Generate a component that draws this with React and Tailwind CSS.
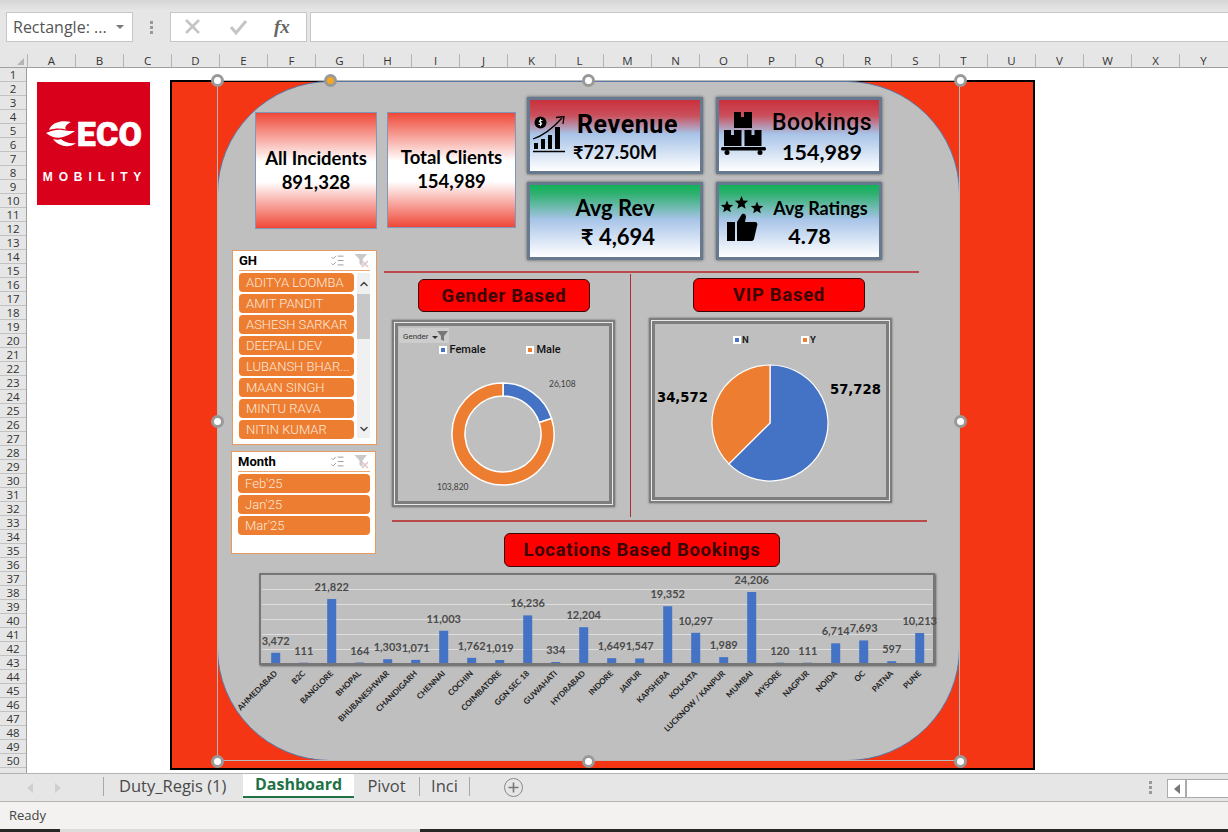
import React from "react";
import { ListChecks, ChevronUp, ChevronDown } from "lucide-react";

const cols = "ABCDEFGHIJKLMNOPQRSTUVWXY".split("");
const rows = Array.from({ length: 50 }, (_, i) => i + 1);
const gh = ["ADITYA LOOMBA", "AMIT PANDIT", "ASHESH SARKAR", "DEEPALI DEV", "LUBANSH BHAR...", "MAAN SINGH", "MINTU RAVA", "NITIN KUMAR"];
const months = ["Feb'25", "Jan'25", "Mar'25"];
const bars = [
  ["AHMEDABAD", 3472], ["B2C", 111], ["BANGLORE", 21822], ["BHOPAL", 164], ["BHUBANESHWAR", 1303], ["CHANDIGARH", 1071],
  ["CHENNAI", 11003], ["COCHIN", 1762], ["COIMBATORE", 1019], ["GGN SEC 18", 16236], ["GUWAHATI", 334], ["HYDRABAD", 12204],
  ["INDORE", 1649], ["JAIPUR", 1547], ["KAPSHERA", 19352], ["KOLKATA", 10297], ["LUCKNOW / KANPUR", 1989], ["MUMBAI", 24206],
  ["MYSORE", 120], ["NAGPUR", 111], ["NOIDA", 6714], ["OC", 7693], ["PATNA", 597], ["PUNE", 10213],
];

const pt = (cx, cy, r, f) => {
  const a = f * 2 * Math.PI;
  return [cx + r * Math.sin(a), cy - r * Math.cos(a)];
};
const pieSlice = (cx, cy, r, a, b) => {
  const [x1, y1] = pt(cx, cy, r, a);
  const [x2, y2] = pt(cx, cy, r, b);
  return `M${cx} ${cy}L${x1} ${y1}A${r} ${r} 0 ${b - a > 0.5 ? 1 : 0} 1 ${x2} ${y2}Z`;
};
const ringSlice = (cx, cy, R, r, a, b) => {
  const [x1, y1] = pt(cx, cy, R, a);
  const [x2, y2] = pt(cx, cy, R, b);
  const [x3, y3] = pt(cx, cy, r, b);
  const [x4, y4] = pt(cx, cy, r, a);
  const l = b - a > 0.5 ? 1 : 0;
  return `M${x1} ${y1}A${R} ${R} 0 ${l} 1 ${x2} ${y2}L${x3} ${y3}A${r} ${r} 0 ${l} 0 ${x4} ${y4}Z`;
};
const star = (cx, cy, R) => {
  let d = "";
  for (let i = 0; i < 10; i++) {
    const [x, y] = pt(cx, cy, i % 2 ? R * 0.45 : R, i / 10);
    d += `${i ? "L" : "M"}${x} ${y}`;
  }
  return d + "Z";
};

const FilterClear = () => (
  <svg width="15" height="15" viewBox="0 0 15 15">
    <path d="M0.5 1H13L8.5 6.5V13L5.500 11V6.500Z" fill="#c9c9c9" />
    <path d="M8 8L14 14M14 8L8 14" stroke="#e2c4c4" strokeWidth="1.500" />
  </svg>
);

const SlicerHead = ({ title }) => (
  <div className="flex h-[20px] items-center justify-between border-b border-[#eba878] pr-[1px]">
    <span className="text-[13px] font-bold text-black [font-family:Roboto,sans-serif]">{title}</span>
    <div className="flex items-center gap-[9px]">
      <ListChecks size={15} strokeWidth={1.500} className="text-[#9a9a9a]" />
      <FilterClear />
    </div>
  </div>
);

const SlicerItem = ({ label }) => (
  <div className="flex h-[19px] shrink-0 items-center overflow-hidden whitespace-nowrap rounded-[4px] bg-[#ed7d31] pl-[7px] text-[13px] font-light text-[#fde9db] [font-family:Roboto,sans-serif]">
    {label}
  </div>
);

const Handle = ({ cls, orange }) => (
  <div className={`absolute z-20 h-[13px] w-[13px] rounded-full border-[3px] border-[#999] ${orange ? "bg-[#f5a623]" : "bg-white"} ${cls}`} />
);

const Tile = ({ cls, children }) => (
  <div className={`absolute flex border-[3px] border-[#66798f] shadow-[0_0_3px_#555] ${cls}`}>{children}</div>
);

const Frame = ({ cls }) => (
  <div className={`absolute border-[2px] border-[#7d7d7d] shadow-[0_0_2px_#666] ${cls}`}>
    <div className="h-full w-full border border-[#e8e8e8]">
      <div className="h-full w-full border-[3px] border-[#7d7d7d]" />
    </div>
  </div>
);

const Pill = ({ cls, children }) => (
  <div className={`absolute flex items-center justify-center rounded-[6px] border border-[#3a0505] bg-[#ff0000] pt-[2px] text-[18.500px] font-bold tracking-[0.7px] text-[#3a0505] [font-family:Roboto,sans-serif] ${cls}`}>
    {children}
  </div>
);

const Logo = () => (
  <div className="absolute left-[10px] top-[14px] flex h-[123px] w-[113px] flex-col items-center bg-[#d9001b] text-white">
    <div className="mt-[37px] flex h-[30px] items-center">
      <svg width="32" height="28" viewBox="41 122 32 28">
        <path d="M67 124C58 122 48 124 45 132C51 130 57 130 62 131.500C60 129 63 126 67 124Z" fill="#fff" />
        <path d="M42 135C47 133 53 131 58 132C63 133 67 133 71 133C67 136 63 138 59 139C53 141 47 139 42 135Z" fill="#fff" />
        <path d="M49 141C54 148 65 151 72 145C66 146 60 144 57 141C55 142 52 142 49 141Z" fill="#fff" />
      </svg>
      <span className="text-[34px] font-black leading-none tracking-[0.2px] [font-family:Roboto,sans-serif] [-webkit-text-stroke:0.6px_#fff]">ECO</span>
    </div>
    <div className="mt-[21px] pl-[3px] text-[12px] font-bold leading-[14px] tracking-[5.900px] [font-family:'Liberation_Sans',sans-serif]">MOBILITY</div>
  </div>
);

export default function App() {
  const total = 26108 + 103820;
  const gf = 26108 / total;
  const pf = 57728 / (57728 + 34572);
  return (
    <div className="flex h-[832px] w-[1228px] flex-col overflow-hidden bg-white [font-family:'Open_Sans',sans-serif]">
      {/* Formula bar */}
      <div className="flex h-[54px] shrink-0 flex-col bg-[#e6e6e6]">
        <div className="h-[12px] bg-[linear-gradient(180deg,#d6d6d6,#e8e8e8)]" />
        <div className="flex h-[30px] items-stretch">
          <div className="ml-[6px] flex w-[127px] items-center justify-between border border-[#c6c6c6] bg-white pl-[6px] pr-[8px] text-[16px] text-[#555]">
            <span>Rectangle: ...</span>
            <span className="h-0 w-0 border-x-[4px] border-t-[4px] border-x-transparent border-t-[#777]" />
          </div>
          <div className="flex w-[37px] flex-col items-center justify-center gap-[2px]">
            {[0, 1, 2].map((i) => <span key={i} className="h-[3px] w-[3px] bg-[#999]" />)}
          </div>
          <div className="flex w-[137px] items-center border border-[#c6c6c6] bg-white">
            <svg width="18" height="18" viewBox="0 0 18 18" className="ml-[13px]"><path d="M2 2L15 15M15 2L2 15" stroke="#c4c4c4" strokeWidth="2.500" /></svg>
            <svg width="20" height="18" viewBox="0 0 20 18" className="ml-[27px]"><path d="M2 9L7 15L17 3" stroke="#c4c4c4" strokeWidth="3" fill="none" /></svg>
            <span className="ml-[25px] text-[19px] font-bold italic text-[#666] [font-family:'Liberation_Serif',serif]">fx</span>
          </div>
          <div className="ml-[3px] flex-1 border border-r-0 border-[#c6c6c6] bg-white" />
        </div>
      </div>
      {/* Column headers */}
      <div className="flex h-[14px] shrink-0 border-b border-[#9f9f9f] bg-[#e6e6e6]">
        <div className="relative w-[27px] shrink-0">
          <span className="absolute bottom-[2px] right-[3px] h-0 w-0 border-b-[7px] border-l-[7px] border-b-[#b4b4b4] border-l-transparent" />
        </div>
        {cols.map((c) => (
          <div key={c} className="flex w-[48px] shrink-0 items-center justify-center border-l border-[#b4b4b4] text-[11.500px] leading-none text-[#333]">{c}</div>
        ))}
      </div>
      {/* Sheet */}
      <div className="flex h-[705px] shrink-0">
        <div className="w-[27px] shrink-0 overflow-hidden border-r border-[#9f9f9f] bg-[#e6e6e6]">
          {rows.map((r) => (
            <div key={r} className="flex h-[14px] items-center justify-center border-b border-[#c2c2c2] text-[11.500px] leading-none text-[#333]">{r}</div>
          ))}
        </div>
        <div className="relative flex-1 overflow-hidden bg-white">
          <Logo />
          <div className="absolute left-[143px] top-[12px] h-[690px] w-[865px] border-[2px] border-black bg-[#f43615]" />
          <div className="absolute left-[190px] top-[13px] h-[680px] w-[743px] rounded-[113px] border border-[#5a78a8] bg-[#bfbfbf]" />

          {/* KPI tiles */}
          <div className="absolute left-[228px] top-[44px] flex h-[117px] w-[122px] flex-col items-center justify-center border border-[#7e97ba] bg-[linear-gradient(180deg,#ef4838_0%,#ffffff_42%,#ffffff_60%,#ef4838_100%)] pb-[2px] text-[18.500px] font-bold leading-[24px] text-black [font-family:Lato,sans-serif]">
            <div>All Incidents</div>
            <div>891,328</div>
          </div>
          <div className="absolute left-[360px] top-[44px] flex h-[116px] w-[129px] flex-col items-center justify-center border border-[#7e97ba] bg-[linear-gradient(180deg,#ef4838_0%,#ffffff_42%,#ffffff_60%,#ef4838_100%)] pb-[2px] text-[18.500px] font-bold leading-[24px] text-black [font-family:Lato,sans-serif]">
            <div>Total Clients</div>
            <div>154,989</div>
          </div>

          <Tile cls="left-[500px] top-[29px] h-[77px] w-[176px] bg-[linear-gradient(180deg,#c9303c_0%,#c9505c_22%,#a8c4e8_48%,#ffffff_100%)]">
            <svg width="34" height="37" viewBox="532 116 34 37" className="ml-[2px] mt-[16px] shrink-0">
              <circle cx="540.500" cy="122.500" r="6" fill="#000" />
              <path d="M542.500 120.500H539.500Q538.500 122.500 540.500 122.500Q542.500 122.500 541.500 124.500H538.500M540.500 118.800V126.200" stroke="#fff" strokeWidth="0.900" fill="none" />
              <path d="M533 139C545 135 553 128 562 118" stroke="#000" strokeWidth="1.300" fill="none" />
              <path d="M556 117.500L564 116.500L563 124" stroke="#000" strokeWidth="1.300" fill="none" />
              <path d="M534 143h4v6h-4zM541 139h4v10h-4zM548 135h4v14h-4zM555 127h5v22h-5z" fill="#000" />
              <path d="M533 151.500H565" stroke="#000" strokeWidth="1.500" />
            </svg>
            <div className="ml-[7px] flex flex-col pt-[10px]">
              <div className="pl-[4px] text-[25px] font-bold leading-[30px] tracking-[0.600px] text-black [font-family:Roboto,sans-serif]">Revenue</div>
              <div className="text-[18px] font-bold leading-[25px] text-black [font-family:Lato,'Noto_Sans',sans-serif]">₹727.50M</div>
            </div>
          </Tile>

          <Tile cls="left-[689px] top-[29px] h-[77px] w-[166px] bg-[linear-gradient(180deg,#c9303c_0%,#c9505c_22%,#a8c4e8_48%,#ffffff_100%)]">
            <svg width="46" height="43" viewBox="720 112 46 43" className="ml-[1px] mt-[12px] shrink-0">
              <path d="M734 112h7v5h3v-5h8v16h-18zM724 130h7v5h3v-5h7.500v16h-17.500zM744.500 130h7v5h3v-5h7v16h-17z" fill="#000" />
              <rect x="721" y="147" width="45" height="3.500" rx="1.500" fill="#000" />
              <circle cx="727" cy="152.500" r="2.500" fill="#000" />
              <circle cx="760" cy="152.500" r="2.500" fill="#000" />
            </svg>
            <div className="ml-[7px] flex w-[98px] flex-col items-center pt-[9px]">
              <div className="text-[23px] font-medium leading-[28px] tracking-[0.500px] text-black [font-family:Roboto,sans-serif]">Bookings</div>
              <div className="text-[21.500px] font-bold leading-[30px] text-black [font-family:Lato,sans-serif]">154,989</div>
            </div>
          </Tile>

          <Tile cls="left-[500px] top-[114px] h-[78px] w-[176px] flex-col items-center bg-[linear-gradient(180deg,#10b259_0%,#2fb070_12%,#a8c4e8_48%,#ffffff_100%)] pt-[8px]">
            <div className="text-[22px] font-bold leading-[29px] text-black [font-family:Lato,sans-serif]">Avg Rev</div>
            <div className="pl-[6px] text-[22px] font-bold leading-[29px] text-black [font-family:Lato,'Noto_Sans',sans-serif]">₹ 4,694</div>
          </Tile>

          <Tile cls="left-[689px] top-[114px] h-[78px] w-[166px] bg-[linear-gradient(180deg,#10b259_0%,#2fb070_12%,#a8c4e8_48%,#ffffff_100%)]">
            <svg width="44" height="46" viewBox="719 196 44 46" className="mt-[11px] shrink-0">
              <path d={star(727, 207, 6.500)} fill="#000" />
              <path d={star(741.500, 203, 7)} fill="#000" />
              <path d={star(757, 208, 6.500)} fill="#000" />
              <path d="M727 222h8v19h-8z" fill="#000" />
              <path d="M737 222l5-8c2-1 4 0 4 3l-1 5h10c2 0 3 2 2 4l-3 13c-.5 1.500-1.500 2-3 2h-14z" fill="#000" />
            </svg>
            <div className="ml-[9px] flex w-[97px] flex-col items-center pt-[10px]">
              <div className="whitespace-nowrap text-[18px] font-bold leading-[27px] text-black [font-family:Lato,sans-serif]">Avg Ratings</div>
              <div className="pr-[22px] text-[21.500px] font-bold leading-[29px] text-black [font-family:Lato,sans-serif]">4.78</div>
            </div>
          </Tile>

          {/* Divider lines */}
          <div className="absolute left-[357px] top-[203px] h-[2px] w-[535px] bg-[#b84a4a]" />
          <div className="absolute left-[603px] top-[206px] h-[243px] w-[1px] bg-[#a83030]" />
          <div className="absolute left-[365px] top-[452px] h-[2px] w-[535px] bg-[#b84a4a]" />

          <Pill cls="left-[391px] top-[211px] h-[33px] w-[172px]">Gender Based</Pill>
          <Pill cls="left-[666px] top-[210px] h-[34px] w-[172px]">VIP Based</Pill>
          <Pill cls="left-[477px] top-[465px] h-[34px] w-[276px]">Locations Based Bookings</Pill>

          {/* Slicers */}
          <div className="absolute left-[205px] top-[182px] flex h-[195px] w-[145px] flex-col border border-[#e69a60] bg-white px-[6px]">
            <SlicerHead title="GH" />
            <div className="mt-[2px] flex gap-[3px]">
              <div className="flex w-[115px] flex-col gap-[2px]">
                {gh.map((g) => <SlicerItem key={g} label={g} />)}
              </div>
              <div className="flex h-[165px] w-[13px] flex-col bg-[#f0f0f0]">
                <div className="flex h-[21px] items-center justify-center"><ChevronUp size={12} strokeWidth={3} className="text-[#444]" /></div>
                <div className="h-[45px] bg-[#c8c8c8]" />
                <div className="flex-1" />
                <div className="flex h-[18px] items-center justify-center"><ChevronDown size={12} strokeWidth={3} className="text-[#444]" /></div>
              </div>
            </div>
          </div>
          <div className="absolute left-[204px] top-[383px] flex h-[103px] w-[145px] flex-col border border-[#e69a60] bg-white pl-[6px] pr-[5px]">
            <SlicerHead title="Month" />
            <div className="mt-[2px] flex flex-col gap-[2px]">
              {months.map((m) => <SlicerItem key={m} label={m} />)}
            </div>
          </div>

          {/* Gender chart */}
          <Frame cls="left-[365px] top-[252px] h-[187px] w-[223px]" />
          <svg className="absolute left-[365px] top-[252px]" width="223" height="187" viewBox="392 320 223 187">
            <rect x="399" y="328" width="50" height="15" fill="#cdcdcd" />
            <text x="403" y="338.500" fontSize="8" fill="#333" fontFamily="Roboto, sans-serif">Gender</text>
            <path d="M432 336h6l-3 3z" fill="#333" />
            <path d="M437 331h11l-4 5v5l-3-1.500v-3.500z" fill="#777" />
            <rect x="439" y="346" width="8" height="8" fill="#fff" /><rect x="441" y="348" width="4" height="4" fill="#4472c4" />
            <text x="449.500" y="353" fontSize="11" fontWeight="500" fill="#111" fontFamily="Roboto, sans-serif">Female</text>
            <rect x="526" y="346" width="8" height="8" fill="#fff" /><rect x="528" y="348" width="4" height="4" fill="#ed7d31" />
            <text x="536.500" y="353" fontSize="11" fontWeight="500" fill="#111" fontFamily="Roboto, sans-serif">Male</text>
            <path d={ringSlice(503, 434, 51, 38, 0, gf)} fill="#4472c4" stroke="#fff" strokeWidth="1.500" />
            <path d={ringSlice(503, 434, 51, 38, gf, 1)} fill="#ed7d31" stroke="#fff" strokeWidth="1.500" />
            <text x="549" y="386.500" fontSize="8.500" fill="#404040" fontFamily="Lato, sans-serif">26,108</text>
            <text x="437" y="490" fontSize="8.500" fill="#404040" fontFamily="Lato, sans-serif">103,820</text>
          </svg>

          {/* VIP chart */}
          <Frame cls="left-[622px] top-[250px] h-[185px] w-[243px]" />
          <svg className="absolute left-[622px] top-[250px]" width="243" height="185" viewBox="649 318 243 185">
            <rect x="733" y="336" width="8" height="8" fill="#fff" /><rect x="735" y="338" width="4" height="4" fill="#4472c4" />
            <text x="742" y="343" fontSize="9.500" fontWeight="700" fill="#222" fontFamily="Roboto, sans-serif">N</text>
            <rect x="801" y="336" width="8" height="8" fill="#fff" /><rect x="803" y="338" width="4" height="4" fill="#ed7d31" />
            <text x="810" y="343" fontSize="9.500" fontWeight="700" fill="#222" fontFamily="Roboto, sans-serif">Y</text>
            <path d={pieSlice(770, 423, 58, 0, pf)} fill="#4472c4" stroke="#fff" strokeWidth="1.200" />
            <path d={pieSlice(770, 423, 58, pf, 1)} fill="#ed7d31" stroke="#fff" strokeWidth="1.200" />
            <text x="830" y="394" fontSize="13.200" fontWeight="700" fill="#000" fontFamily="'DejaVu Sans', sans-serif">57,728</text>
            <text x="657" y="402" fontSize="13.200" fontWeight="700" fill="#000" fontFamily="'DejaVu Sans', sans-serif">34,572</text>
          </svg>

          {/* Bar chart */}
          <div className="absolute left-[232px] top-[505px] h-[92px] w-[676px] border-[2px] border-[#767676] shadow-[1px_1px_2px_#555]" />
          <svg className="absolute left-[223px] top-[497px] overflow-visible" width="720" height="180" viewBox="250 565 720 180">
            {[589, 604, 619, 634, 649].map((y) => <path key={y} d={`M262 ${y + 0.5}H932`} stroke="#dedede" strokeWidth="1" />)}
            {bars.map(([name, v], i) => {
              const cx = 275.7 + i * 28;
              const h = (v * 71) / 24206;
              const top = 663 - h;
              return (
                <g key={name}>
                  <rect x={cx - 4.500} y={top} width="9" height={h} fill="#4472c4" />
                  <text x={cx} y={top - 8} textAnchor="middle" fontSize="11" fontWeight="700" fill="#4a4a4a" fontFamily="Lato, sans-serif">{v.toLocaleString("en-US")}</text>
                  <text transform={`translate(${cx + 2} 674) rotate(-45)`} textAnchor="end" fontSize="8" fontWeight="700" fill="#222" fontFamily="Lato, sans-serif">{name}</text>
                </g>
              );
            })}
          </svg>

          {/* Selection outline and handles */}
          <div className="absolute left-[190px] top-[12px] z-10 h-[681px] w-[743px] border border-[#b9b9b9]" />
          <Handle cls="left-[184px] top-[6px]" />
          <Handle cls="left-[297px] top-[6px]" orange />
          <Handle cls="left-[555px] top-[6px]" />
          <Handle cls="left-[927px] top-[6px]" />
          <Handle cls="left-[184px] top-[347px]" />
          <Handle cls="left-[927px] top-[347px]" />
          <Handle cls="left-[184px] top-[687px]" />
          <Handle cls="left-[555px] top-[687px]" />
          <Handle cls="left-[927px] top-[687px]" />
        </div>
      </div>
      {/* Tabs */}
      <div className="flex h-[29px] shrink-0 items-start border-y border-[#b4b4b4] bg-[#e6e6e6]">
        <div className="flex h-full w-[103px] shrink-0 items-center">
          <span className="ml-[27px] h-0 w-0 border-y-[5px] border-r-[6px] border-y-transparent border-r-[#cfcfcf]" />
          <span className="ml-[22px] h-0 w-0 border-y-[5px] border-l-[6px] border-y-transparent border-l-[#cfcfcf]" />
        </div>
        <div className="mt-[3px] flex h-[19px] w-[140px] items-center whitespace-nowrap border-l border-[#a8a8a8] pl-[15px] text-[16.500px] text-[#4a4a4a]">Duty_Regis (1)</div>
        <div className="flex h-[24px] w-[111px] items-center justify-center border-b-[2px] border-[#217346] bg-white pb-[3px] text-[16px] font-bold text-[#217346]">Dashboard</div>
        <div className="mt-[3px] flex h-[19px] w-[65px] items-center justify-center text-[16.500px] text-[#4a4a4a]">Pivot</div>
        <div className="mt-[3px] flex h-[19px] w-[51px] items-center justify-center border-x border-[#a8a8a8] text-[16.500px] text-[#4a4a4a]">Inci</div>
        <div className="ml-[34px] mt-[4px] flex h-[19px] w-[19px] items-center justify-center rounded-full border-[1.500px] border-[#888] text-[#777]">
          <svg width="11" height="11" viewBox="0 0 11 11"><path d="M5.500 0.500V10.500M0.500 5.500H10.500" stroke="#777" strokeWidth="1.600" /></svg>
        </div>
        <div className="flex-1" />
        <div className="mr-[15px] mt-[7px] flex flex-col gap-[2px]">
          {[0, 1, 2].map((i) => <span key={i} className="h-[3px] w-[3px] bg-[#999]" />)}
        </div>
        <div className="mt-[5px] flex h-[19px] w-[61px] border border-r-0 border-[#ababab] bg-white">
          <div className="flex w-[19px] items-center justify-center border-r-[2px] border-[#ababab]">
            <span className="h-0 w-0 border-y-[5px] border-r-[6px] border-y-transparent border-r-[#777]" />
          </div>
        </div>
      </div>
      {/* Status */}
      <div className="flex h-[27px] shrink-0 items-center bg-[#f3f2f1] pl-[9px] pt-[1px] text-[13px] text-[#444]">Ready</div>
      <div className="flex h-[3px] shrink-0">
        <div className="w-[60px] bg-[#2b2626]" />
        <div className="w-[360px] bg-[#dcdcdc]" />
        <div className="flex-1 bg-[#2b2626]" />
      </div>
    </div>
  );
}
